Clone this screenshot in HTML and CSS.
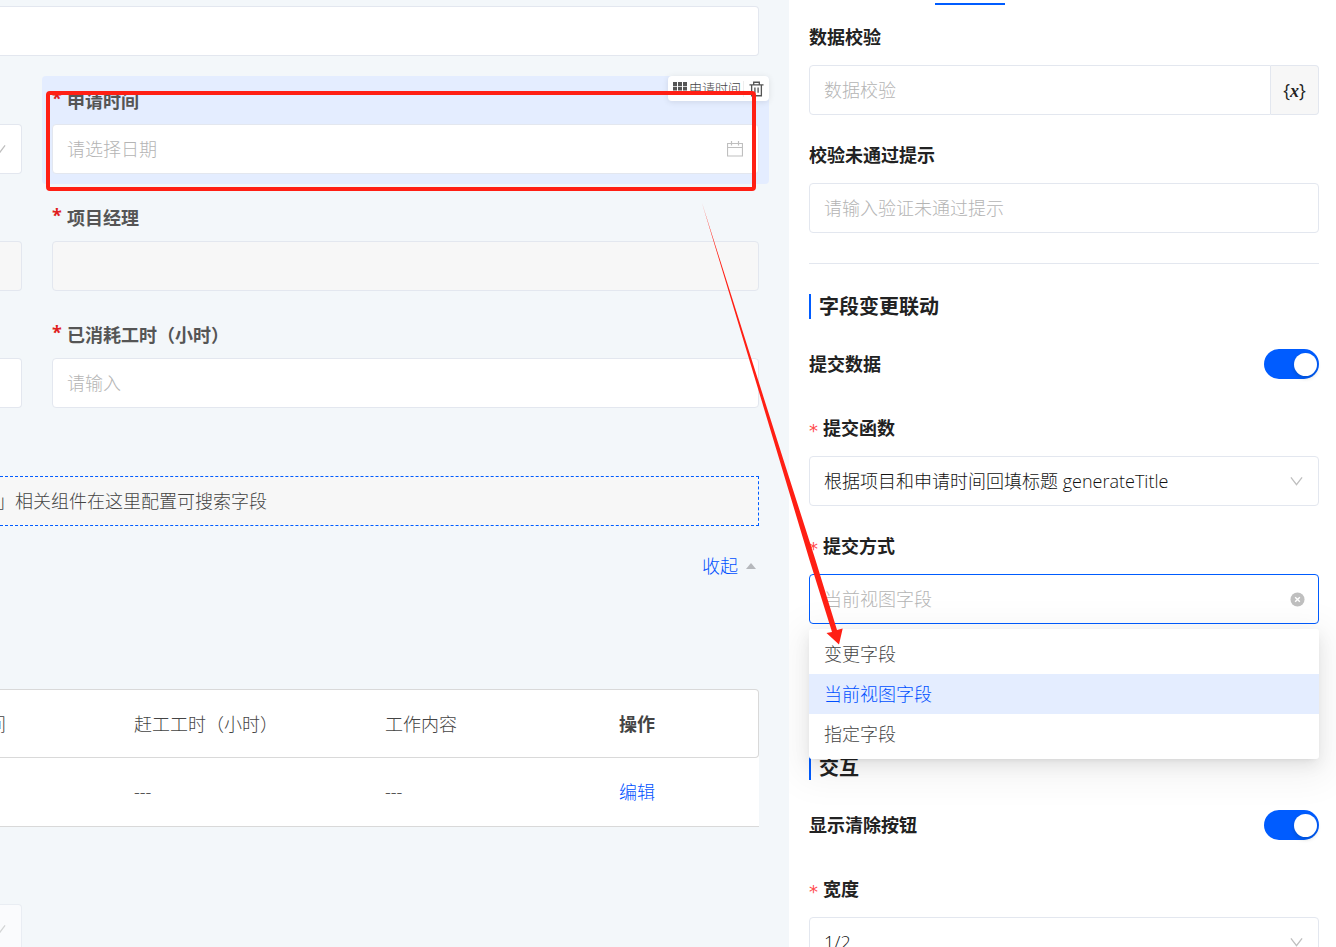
FILE: index.html
```html
<!DOCTYPE html>
<html lang="zh-CN">
<head>
<meta charset="utf-8">
<title>表单设计器</title>
<link rel="stylesheet" href="styles.css">
</head>
<body>
<div class="designer">
  <main class="canvas">
    <input class="box box-cut" type="text" aria-label="标题">
    <div class="form-grid">
      <div class="field">
        <div class="box box-cut box-icon"><svg class="chevron" viewBox="0 0 14 10"><path d="M1 1l6 8 6-8"/></svg></div>
      </div>
      <div class="field field-selected">
        <label class="label" for="apply-date"><span class="star">*</span>申请时间</label>
        <div class="control">
          <input class="box" id="apply-date" type="text" placeholder="请选择日期">
          <svg class="control-icon calendar" viewBox="0 0 16 16"><path d="M.5 2.500h15v12.500H.5zM.5 6.500h15M4.500 0v4.500M11.500 0v4.500"/></svg>
        </div>
        <div class="toolbar">
          <svg class="grip" viewBox="0 0 14 13"><path d="M0 0h4v4H0zM5 0h4v4H5zM10 0h4v4h-4zM0 4.800h4V8.500H0zM5 4.800h4V8.500H5zM10 4.800h4V8.500h-4zM0 9.300h4V13H0zM5 9.300h4V13H5zM10 9.300h4V13h-4z"/></svg>
          <span class="toolbar-name">申请时间</span>
          <button class="toolbar-delete" type="button" aria-label="删除"><svg viewBox="0 0 16 16"><path d="M.5 3.500h15M5 3V.8h6V3M2.800 3.500v11.700h10.400V3.500M6.300 6.500v5.500M9.700 6.500v5.500"/></svg></button>
        </div>
      </div>
      <div class="field"><div class="box box-cut box-disabled"></div></div>
      <div class="field">
        <label class="label" for="manager"><span class="star">*</span>项目经理</label>
        <input class="box box-disabled" id="manager" type="text" disabled>
      </div>
      <div class="field"><div class="box box-cut"></div></div>
      <div class="field">
        <label class="label" for="used-hours"><span class="star">*</span>已消耗工时（小时）</label>
        <input class="box" id="used-hours" type="text" placeholder="请输入">
      </div>
    </div>
    <div class="search-slot"><span class="search-text">」相关组件在这里配置可搜索字段</span></div>
    <button class="collapse" type="button">收起<svg viewBox="0 0 10 6"><path d="M0 6l5-6 5 6z"/></svg></button>
    <table class="table">
      <colgroup><col class="col-a"><col class="col-b"><col class="col-c"><col></colgroup>
      <thead><tr><th class="cell-cut"><span>间</span></th><th>赶工工时（小时）</th><th>工作内容</th><th class="th-strong">操作</th></tr></thead>
      <tbody><tr><td></td><td>---</td><td>---</td><td><a class="link" href="#">编辑</a></td></tr></tbody>
    </table>
    <div class="form-grid form-tail">
      <div class="box box-cut box-icon box-faded"><svg class="chevron" viewBox="0 0 14 10"><path d="M1 1l6 8 6-8"/></svg></div>
    </div>
  </main>

  <aside class="panel">
    <div class="tabs"><span class="tab-bar"></span></div>
    <div class="prop">
      <label class="prop-label" for="check">数据校验</label>
      <div class="addon-group">
        <input class="box" id="check" type="text" placeholder="数据校验">
        <button class="addon" type="button">{<b>x</b>}</button>
      </div>
    </div>
    <div class="prop">
      <label class="prop-label" for="check-tip">校验未通过提示</label>
      <input class="box" id="check-tip" type="text" placeholder="请输入验证未通过提示">
    </div>
    <hr class="divider">
    <h2 class="section">字段变更联动</h2>
    <div class="switch-row">
      <label class="prop-label" for="submit-data">提交数据</label>
      <input class="switch" id="submit-data" type="checkbox" role="switch" checked>
    </div>
    <div class="prop">
      <label class="prop-label" for="submit-fn"><span class="req">*</span>提交函数</label>
      <div class="control">
        <select class="box" id="submit-fn"><option>根据项目和申请时间回填标题 generateTitle</option></select>
        <svg class="control-icon chevron" viewBox="0 0 14 10"><path d="M1 1l6 8 6-8"/></svg>
      </div>
    </div>
    <div class="prop">
      <label class="prop-label" for="submit-way"><span class="req">*</span>提交方式</label>
      <div class="control">
        <input class="box box-active" id="submit-way" type="text" role="combobox" aria-expanded="true" aria-controls="way-list" placeholder="当前视图字段">
        <svg class="control-icon clear" viewBox="0 0 16 16"><circle cx="8" cy="8" r="7.500"/><path d="M5.500 5.500l5 5M10.500 5.500l-5 5"/></svg>
        <ul class="menu" id="way-list" role="listbox">
          <li class="option" role="option">变更字段</li>
          <li class="option option-on" role="option" aria-selected="true">当前视图字段</li>
          <li class="option" role="option">指定字段</li>
        </ul>
      </div>
    </div>
    <h2 class="section section-after-menu">交互</h2>
    <div class="switch-row">
      <label class="prop-label" for="show-clear">显示清除按钮</label>
      <input class="switch" id="show-clear" type="checkbox" role="switch" checked>
    </div>
    <div class="prop">
      <label class="prop-label" for="width"><span class="req">*</span>宽度</label>
      <div class="control">
        <select class="box" id="width"><option>1/2</option></select>
        <svg class="control-icon chevron" viewBox="0 0 14 10"><path d="M1 1l6 8 6-8"/></svg>
      </div>
    </div>
  </aside>

  <svg class="annotation" width="900" height="700" viewBox="0 0 900 700">
    <rect x="48" y="93" width="706" height="96" rx="2"/>
    <path d="M702 203L783.500 460 815.500 560 837 630 842.700 628.500 839 644.500 826.500 633 832 632 809.500 560 779.500 460z"/>
  </svg>
</div>
</body>
</html>
```
FILE: styles.css
```css
* { box-sizing: border-box; }
body {
  margin: 0;
  font-family: "Open Sans", "Noto Sans CJK SC", sans-serif;
  font-size: 18px;
  font-weight: 300;
  line-height: 30px;
  color: #444;
}
input, select, button { font: inherit; color: inherit; }
button { padding: 0; border: 0; background: none; }

.designer { position: relative; display: flex; height: 100vh; overflow: hidden; }
.canvas {
  flex: 1;
  min-width: 0;
  padding: 6px 30px 0 0;
  background: #f3f7fa;
  overflow: hidden;
}
.panel {
  flex: 0 0 547px;
  padding: 0 17px 0 20px;
  background: #fff;
  color: #222;
  overflow: hidden;
}

.box {
  display: block;
  width: 100%;
  height: 50px;
  padding: 0 14px;
  border: 1px solid #e3e7ef;
  border-radius: 4px;
  background: #fff;
  outline: 0;
  appearance: none;
}
.box::placeholder { color: #b4b4b4; opacity: 1; }
.box-cut { border-left: 0; border-radius: 0 4px 4px 0; padding: 0 15px 0 0; }
.box-disabled { background: #f7f7f7; }
.box-active { border-color: #005cff; }
.box-faded { opacity: .6; }
.box-icon { display: flex; align-items: center; justify-content: flex-end; overflow: hidden; }

select.box { color: #111; }

.control { position: relative; display: grid; align-items: center; }
.control > .box, .control-icon { grid-area: 1 / 1; }
.control-icon { justify-self: end; margin-right: 16px; pointer-events: none; }
.chevron { flex: none; width: 13px; height: 10px; fill: none; stroke: #bfbfbf; stroke-width: 1.400; }
.calendar { width: 16px; height: 16px; fill: none; stroke: #bfbfbf; stroke-width: 1.200; }
.clear { width: 15px; height: 15px; margin-right: 14px; fill: #bfbfbf; stroke: #fff; stroke-width: 1.500; }
.clear circle { stroke: none; }

.form-grid {
  display: grid;
  grid-template-columns: 22px minmax(0, 1fr);
  gap: 29px 30px;
  margin-top: 30px;
}
.field { display: flex; flex-direction: column; justify-content: flex-end; gap: 8px; min-width: 0; }
.field-selected {
  position: relative;
  margin: -10px;
  padding: 10px;
  border-radius: 4px;
  background: #e4edff;
}
.label { display: flex; gap: 6px; font-weight: 700; color: #555; }
.star { width: 9px; color: #e01f1f; line-height: 24px; }

.toolbar {
  position: absolute;
  top: 0;
  right: 0;
  display: flex;
  align-items: center;
  height: 25px;
  padding: 0 5px;
  border-radius: 4px;
  background: #fff;
  box-shadow: 0 1px 6px rgba(0, 0, 0, .1);
  font-size: 13px;
  line-height: 25px;
}
.grip { width: 14px; height: 13px; fill: #555; }
.toolbar-name { padding: 0 2px; }
.toolbar-delete { display: flex; padding-left: 5px; border-left: 1px solid #eee; }
.toolbar-delete svg { width: 15px; height: 16px; fill: none; stroke: #555; stroke-width: 1.400; }

.search-slot {
  display: flex;
  align-items: center;
  height: 50px;
  margin-top: 68px;
  border: 1px dashed #005cff;
  border-left: 0;
  background: #f7f7f7;
}
.search-text { margin-left: -3px; }
.collapse {
  display: flex;
  align-items: center;
  gap: 8px;
  margin: 25px 3px 0 auto;
  color: #0050ff;
}
.collapse svg { width: 10px; height: 6px; fill: #b5b8bc; }

.table {
  width: 100%;
  margin-top: 108px;
  table-layout: fixed;
  border-spacing: 0;
  background: #fff;
  border-radius: 0 4px 0 0;
}
.table th, .table td {
  height: 69px;
  padding: 0;
  border-bottom: 1px solid #d9d9d9;
  font-weight: inherit;
  text-align: left;
}
.table th { border-top: 1px solid #d9d9d9; }
.table th:last-child { border-right: 1px solid #d9d9d9; border-radius: 0 4px 4px 0; }
.table .th-strong { font-weight: 700; }
.cell-cut span { margin-left: -12px; }
.col-a { width: 134px; }
.col-b { width: 251px; }
.col-c { width: 234px; }
.link { color: #0050ff; text-decoration: none; }
.form-tail { margin-top: 77px; }

.tabs { height: 22px; padding: 3px 0 0 126px; }
.tab-bar { display: block; width: 70px; height: 2px; background: #005cff; }
.prop + .prop { margin-top: 25px; }
.prop-label { display: flex; gap: 5px; height: 30px; font-weight: 700; }
.prop > .prop-label { margin-bottom: 13px; }
.req {
  width: 9px;
  color: #ff4d4f;
  font-family: "DejaVu Sans", sans-serif;
  font-weight: 400;
  line-height: 36px;
}
.addon-group { display: flex; }
.addon-group .box { flex: 1; min-width: 0; border-radius: 4px 0 0 4px; }
.addon {
  width: 48px;
  border: 1px solid #e3e7ef;
  border-left: 0;
  border-radius: 0 4px 4px 0;
  background: #f7f7f7;
  font-weight: 400;
}
.addon b { font-family: "Liberation Serif", serif; font-style: italic; }
.divider { height: 1px; margin: 30px 0; border: 0; background: #e3e7ef; }
.section {
  margin: 0;
  padding-left: 8px;
  border-left: 2px solid #005cff;
  font-size: 20px;
  line-height: 25px;
}
.section-after-menu { margin-top: 131px; }
.switch-row { display: flex; align-items: center; justify-content: space-between; margin: 30px 0 34px; }
.switch {
  display: flex;
  align-items: center;
  justify-content: flex-end;
  width: 55px;
  height: 30px;
  margin: 0;
  padding-right: 2px;
  border-radius: 15px;
  background: #005cff;
  appearance: none;
}
.switch::before {
  content: "";
  width: 23px;
  height: 23px;
  border-radius: 50%;
  background: #fff;
  box-shadow: 0 2px 4px rgba(0, 35, 11, .2);
}
.menu {
  position: absolute;
  top: calc(100% + 5px);
  left: 0;
  right: 0;
  z-index: 1;
  margin: 0;
  padding: 5px 0;
  list-style: none;
  border-radius: 3px;
  background: #fff;
  color: #444;
  box-shadow: 0 3px 6px -4px rgba(0, 0, 0, .12), 0 6px 16px rgba(0, 0, 0, .08), 0 9px 36px 12px rgba(0, 0, 0, .05);
}
.option { padding: 5px 15px; }
.option-on { background: #e4edff; color: #0050ff; }

.annotation { position: absolute; top: 0; left: 0; z-index: 2; pointer-events: none; }
.annotation rect { fill: none; stroke: #ff1f14; stroke-width: 4; }
.annotation path { fill: #ff1f14; }
```
